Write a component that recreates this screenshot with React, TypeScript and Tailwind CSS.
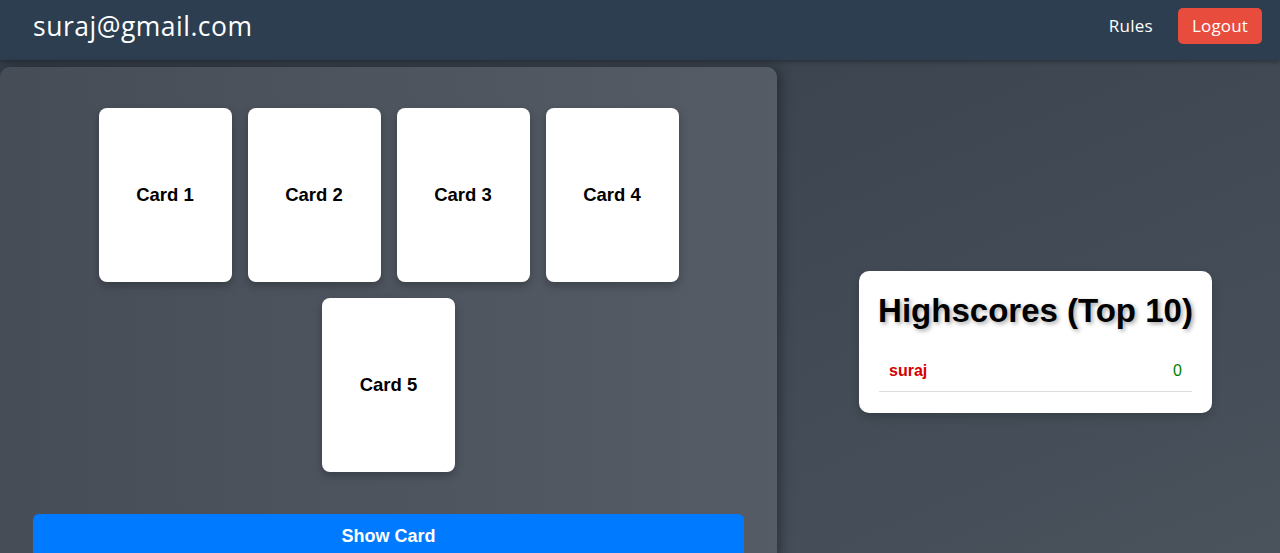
import React from "react";

const cards = ["Card 1", "Card 2", "Card 3", "Card 4", "Card 5"];

const scores = [{ name: "suraj", score: 0 }];

const App: React.FC = () => {
  return (
    <div className="min-h-[553px] h-[553px] overflow-hidden flex flex-col bg-gradient-to-br from-[#333d49] to-[#4a525c] font-['Liberation_Sans',Arial,sans-serif]">
      {/* Navbar */}
      <nav className="h-[60px] shrink-0 bg-[#2c3e50] flex items-start justify-between pt-[8px] pl-[33px] pr-[18px] shadow-[0_2px_4px_rgba(0,0,0,0.3)] font-['Open_Sans',sans-serif]">
        <span className="text-[26.5px] leading-[36px] font-medium text-white tracking-[0.5px]">suraj@gmail.com</span>
        <div className="flex items-center gap-[25px]">
          <a className="text-[17px] text-white tracking-[0.3px]">Rules</a>
          <button className="bg-[#e74c3c] text-white text-[17px] tracking-[0.2px] rounded-[5px] h-[36px] w-[84px]">
            Logout
          </button>
        </div>
      </nav>

      <div className="flex flex-1 pt-[7px]">
        {/* Game panel */}
        <div className="w-[777px] shrink-0 rounded-t-[10px] bg-gradient-to-r from-[#464d57] to-[#555c66] shadow-[4px_0_12px_rgba(0,0,0,0.35)] pt-[41px] px-[33px] flex flex-col items-center">
          <div className="w-[620px] flex flex-wrap justify-center gap-[16px]">
            {cards.map((card) => (
              <div
                key={card}
                className="w-[133px] h-[174px] bg-white rounded-[8px] shadow-[0_4px_8px_rgba(0,0,0,0.25)] flex items-center justify-center text-[18.5px] font-bold text-black"
              >
                {card}
              </div>
            ))}
          </div>
          <button className="mt-[42px] w-full h-[45px] shrink-0 bg-[#007bff] rounded-[6px] text-white text-[18px] font-bold">
            Show Card
          </button>
        </div>

        {/* Highscores */}
        <div className="flex-1 flex items-start justify-center pt-[204px] pl-[14px]">
          <div className="w-[353px] bg-white rounded-[10px] shadow-[0_4px_10px_rgba(0,0,0,0.2)] px-[20px] pt-[20px] pb-[21px]">
            <h2 className="-mx-[6px] whitespace-nowrap text-[33px] font-bold text-black text-center leading-[40px] [text-shadow:2px_2px_4px_rgba(0,0,0,0.35)]">
              Highscores (Top 10)
            </h2>
            <ul className="mt-[20px]">
              {scores.map((s) => (
                <li
                  key={s.name}
                  className="flex justify-between items-center px-[10px] h-[41px] border-b border-[#dddddd]"
                >
                  <span className="text-[#d50000] font-bold text-[16px]">{s.name}</span>
                  <span className="text-[#008000] text-[16px]">{s.score}</span>
                </li>
              ))}
            </ul>
          </div>
        </div>
      </div>
    </div>
  );
};

export default App;
